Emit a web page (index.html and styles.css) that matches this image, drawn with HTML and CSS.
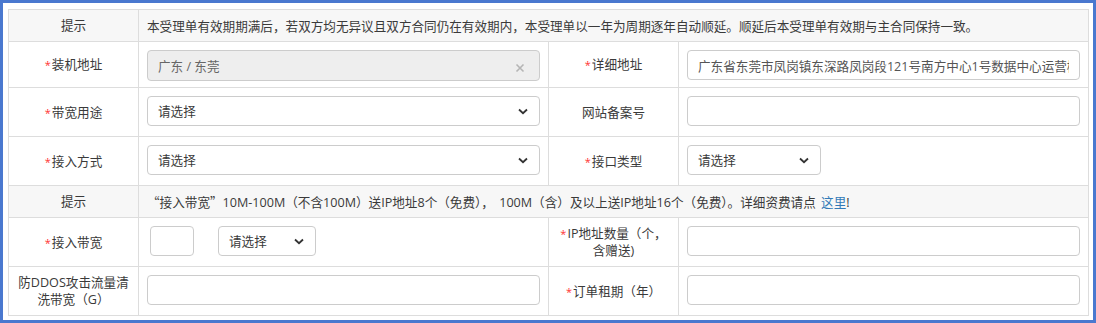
FILE: index.html
```html
<!DOCTYPE html>
<html>

<head>
    <meta charset="utf-8">
    <link rel="stylesheet" href="styles.css">
</head>

<body>
    <div class="frame">
        <table class="form">
            <colgroup>
                <col class="c-label">
                <col class="c-field">
                <col class="c-label">
                <col class="c-field">
            </colgroup>
            <tr class="tip h32">
                <td class="label">提示</td>
                <td class="tip-text" colspan="3">本受理单有效期期满后，若双方均无异议且双方合同仍在有效期内，本受理单以一年为周期逐年自动顺延。顺延后本受理单有效期与主合同保持一致。</td>
            </tr>
            <tr class="h46">
                <td class="label"><i class="req">*</i>装机地址</td>
                <td class="field">
                    <div class="picker">
                        <span>广东 / 东莞</span>
                        <svg class="clear" width="10" height="10" viewBox="0 0 10 10">
                            <path d="M1.5 1.5 L8.5 8.5 M8.5 1.5 L1.5 8.5" stroke="#b5b5b5" stroke-width="1.6" fill="none" />
                        </svg>
                    </div>
                </td>
                <td class="label"><i class="req">*</i>详细地址</td>
                <td class="field"><input class="text" type="text" value="广东省东莞市凤岗镇东深路凤岗段121号南方中心1号数据中心运营楼"></td>
            </tr>
            <tr class="h49">
                <td class="label"><i class="req">*</i>带宽用途</td>
                <td class="field">
                    <div class="select">
                        <span>请选择</span>
                        <svg width="10" height="7" viewBox="0 0 10 7">
                            <path d="M1 1.5 L5 5.2 L9 1.5" stroke="#333" stroke-width="1.8" fill="none" />
                        </svg>
                    </div>
                </td>
                <td class="label">网站备案号</td>
                <td class="field"><input class="text" type="text"></td>
            </tr>
            <tr class="h49">
                <td class="label"><i class="req">*</i>接入方式</td>
                <td class="field">
                    <div class="select">
                        <span>请选择</span>
                        <svg width="10" height="7" viewBox="0 0 10 7">
                            <path d="M1 1.5 L5 5.2 L9 1.5" stroke="#333" stroke-width="1.8" fill="none" />
                        </svg>
                    </div>
                </td>
                <td class="label"><i class="req">*</i>接口类型</td>
                <td class="field">
                    <div class="select w134">
                        <span>请选择</span>
                        <svg width="10" height="7" viewBox="0 0 10 7">
                            <path d="M1 1.5 L5 5.2 L9 1.5" stroke="#333" stroke-width="1.8" fill="none" />
                        </svg>
                    </div>
                </td>
            </tr>
            <tr class="tip h32">
                <td class="label">提示</td>
                <td class="tip-text" colspan="3"><span class="cjk">“</span>接入带宽<span class="cjk">”</span>10M-100M（不含100M）送IP地址8个（免费）， 100M（含）及以上送IP地址16个（免费）。详细资费请点 <a class="link" href="#">这里</a>!</td>
            </tr>
            <tr class="h49">
                <td class="label"><i class="req">*</i>接入带宽</td>
                <td class="field">
                    <div class="inline">
                        <input class="text num" type="text">
                        <div class="select w98">
                            <span>请选择</span>
                            <svg width="10" height="7" viewBox="0 0 10 7">
                                <path d="M1 1.5 L5 5.2 L9 1.5" stroke="#333" stroke-width="1.8" fill="none" />
                            </svg>
                        </div>
                    </div>
                </td>
                <td class="label"><i class="req">*</i>IP地址数量（个，含赠送)</td>
                <td class="field"><input class="text" type="text"></td>
            </tr>
            <tr class="h49">
                <td class="label">防DDOS攻击流量清洗带宽（G）</td>
                <td class="field"><input class="text" type="text"></td>
                <td class="label"><i class="req">*</i>订单租期（年）</td>
                <td class="field"><input class="text" type="text"></td>
            </tr>
        </table>
    </div>
</body>

</html>
```

FILE: styles.css
```css
* {
    padding: 0;
    margin: 0;
    box-sizing: border-box;
}

body {
    font-family: "Open Sans", "Noto Sans CJK SC", sans-serif;
    font-size: 12.6px;
    color: #3a3a3a;
    background: #fff;
}

.frame {
    width: 1096px;
    height: 323px;
    border: 3px solid #4a78cf;
    padding: 6px 5px 0 5px;
}

.form {
    width: 1080px;
    border-collapse: collapse;
    table-layout: fixed;
}

.c-label {
    width: 130px;
}

.c-field {
    width: 410px;
}

.form td {
    border: 1px solid #ddd;
    padding: 0 8px;
}

.h32 {
    height: 32px;
}

.h46 {
    height: 46px;
}

.h49 {
    height: 49px;
}

.tip td {
    background: #f7f7f7;
}

.label {
    text-align: center;
    vertical-align: middle;
    line-height: 17px;
}

.tip-text {
    vertical-align: middle;
    word-spacing: 2px;
}

.cjk {
    font-family: "Noto Sans CJK SC", sans-serif;
}

.link {
    color: #337ab7;
    text-decoration: none;
}

.req {
    font-style: normal;
    color: #f33;
    font-size: 11px;
    margin-right: 1px;
}

.form td.field {
    vertical-align: top;
    padding-top: 8px;
}

.text {
    display: block;
    width: 100%;
    height: 30px;
    border: 1px solid #ccc;
    border-radius: 4px;
    padding: 0 10px;
    font: inherit;
    color: #555;
    background: #fff;
    outline: none;
}

.picker {
    display: flex;
    align-items: center;
    justify-content: space-between;
    height: 31px;
    border: 1px solid #ccc;
    border-radius: 4px;
    padding: 0 14px 0 10px;
    background: #eee;
    color: #666;
}

.clear {
    margin-top: 5px;
}

.select {
    display: flex;
    align-items: center;
    justify-content: space-between;
    height: 30px;
    border: 1px solid #ccc;
    border-radius: 4px;
    padding: 0 11px 2px 10px;
    background: #fff;
}

.select svg {
    margin-top: 3px;
}

.w134 {
    width: 134px;
}

.w98 {
    width: 98px;
}

.inline {
    display: flex;
    gap: 24px;
    padding-left: 3px;
}

.num {
    width: 44px;
}
```
